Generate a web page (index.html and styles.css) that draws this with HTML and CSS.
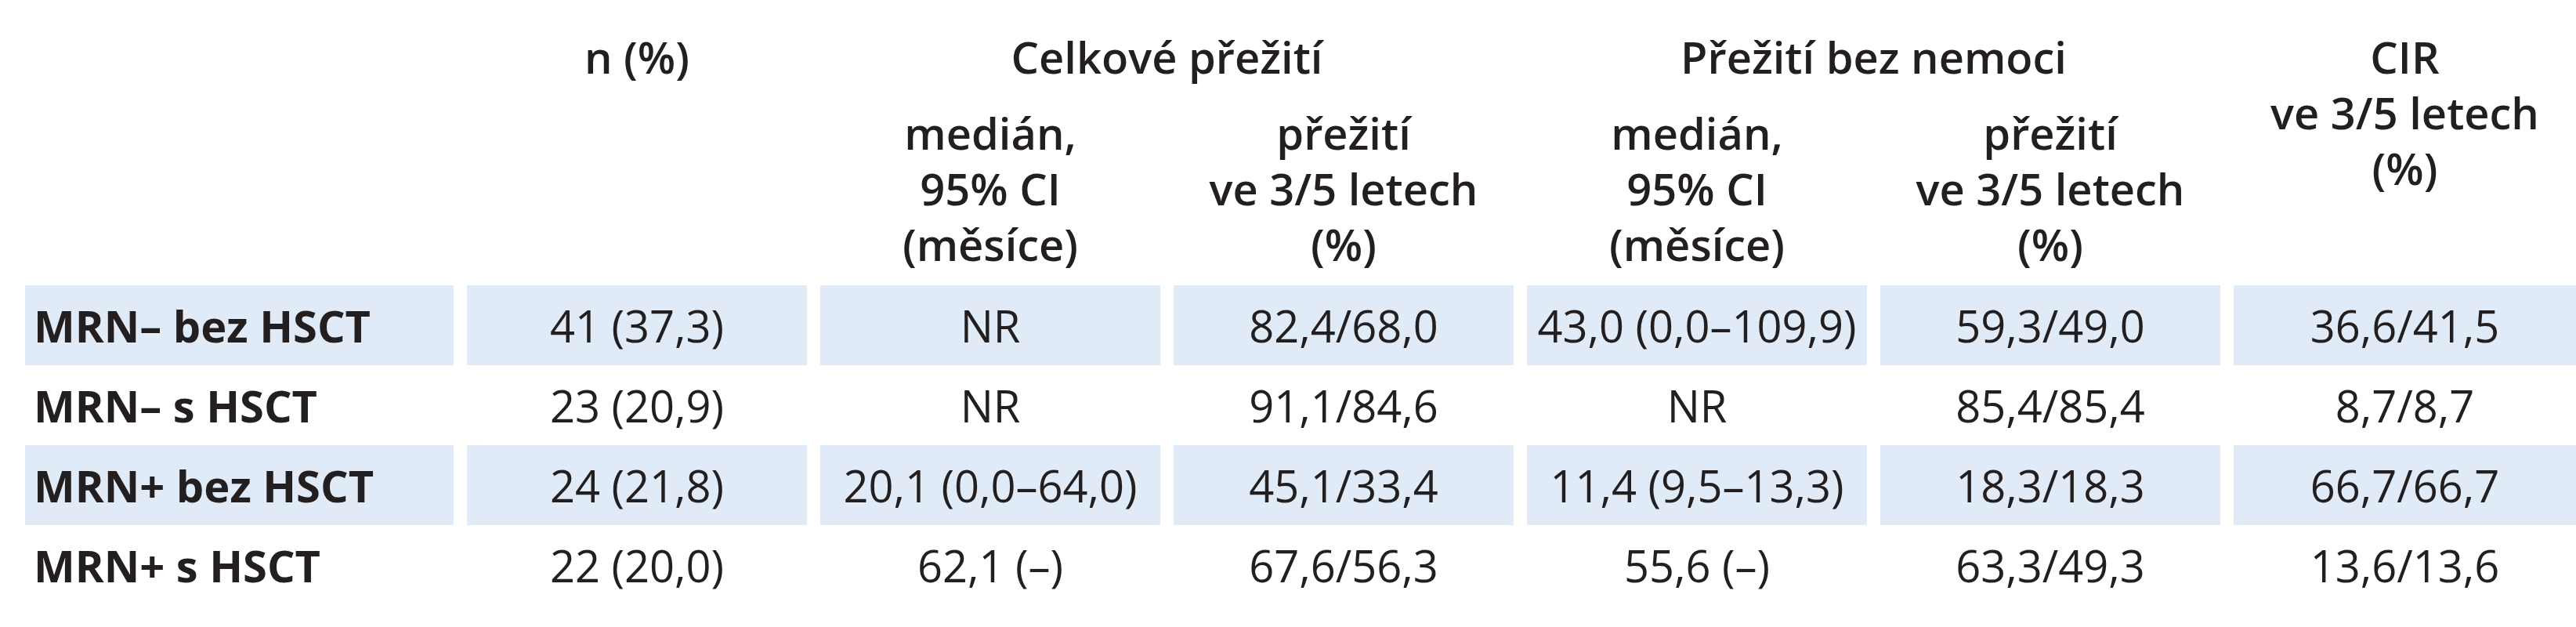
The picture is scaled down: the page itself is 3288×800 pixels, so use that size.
FILE: index.html
```html
<!DOCTYPE html>
<html lang="cs">
<head>
<meta charset="utf-8">
<title>Přežití podle MRN a HSCT</title>
<link rel="stylesheet" href="styles.css">
</head>
<body>
<table class="results">
  <colgroup>
    <col class="c-label">
    <col class="c-data">
    <col class="c-data">
    <col class="c-data">
    <col class="c-data">
    <col class="c-data">
    <col class="c-last">
  </colgroup>
  <thead>
    <tr class="head-top">
      <th class="h-empty" rowspan="2"></th>
      <th class="h-span" rowspan="2">n (%)</th>
      <th colspan="2">Celkové přežití</th>
      <th colspan="2">Přežití bez nemoci</th>
      <th class="h-span" rowspan="2">CIR<br>ve 3/5 letech<br>(%)</th>
    </tr>
    <tr class="head-sub">
      <th>medián,<br>95% CI<br>(měsíce)</th>
      <th>přežití<br>ve 3/5 letech<br>(%)</th>
      <th>medián,<br>95% CI<br>(měsíce)</th>
      <th>přežití<br>ve 3/5 letech<br>(%)</th>
    </tr>
  </thead>
  <tbody>
    <tr class="shaded">
      <th>MRN– bez HSCT</th>
      <td>41 (37,3)</td>
      <td>NR</td>
      <td>82,4/68,0</td>
      <td>43,0 (0,0–109,9)</td>
      <td>59,3/49,0</td>
      <td>36,6/41,5</td>
    </tr>
    <tr>
      <th>MRN– s HSCT</th>
      <td>23 (20,9)</td>
      <td>NR</td>
      <td>91,1/84,6</td>
      <td>NR</td>
      <td>85,4/85,4</td>
      <td>8,7/8,7</td>
    </tr>
    <tr class="shaded">
      <th>MRN+ bez HSCT</th>
      <td>24 (21,8)</td>
      <td>20,1 (0,0–64,0)</td>
      <td>45,1/33,4</td>
      <td>11,4 (9,5–13,3)</td>
      <td>18,3/18,3</td>
      <td>66,7/66,7</td>
    </tr>
    <tr>
      <th>MRN+ s HSCT</th>
      <td>22 (20,0)</td>
      <td>62,1 (–)</td>
      <td>67,6/56,3</td>
      <td>55,6 (–)</td>
      <td>63,3/49,3</td>
      <td>13,6/13,6</td>
    </tr>
  </tbody>
</table>
</body>
</html>
```

FILE: styles.css
```css
html, body {
  margin: 0;
  padding: 0;
  background: #ffffff;
  overflow: hidden;
}

body {
  font-family: "Open Sans", "Noto Sans", "DejaVu Sans", sans-serif;
  color: #231f20;
  font-size: 56px;
  line-height: 71px;
}

.results {
  border-collapse: separate;
  border-spacing: 17px 0;
  table-layout: fixed;
  margin-left: 15px;
  width: 3290px;
}

.c-label { width: 547px; }
.c-data { width: 434px; }
.c-last { width: 437px; }

.results th,
.results td {
  padding: 0;
  text-align: center;
  white-space: nowrap;
}

.results thead th {
  font-weight: 600;
  vertical-align: top;
}

.head-top th {
  padding-top: 37px;
}

.head-sub th {
  padding-top: 26px;
  padding-bottom: 17px;
}

.results tbody tr {
  height: 102px;
}

.results tbody th,
.results tbody td {
  vertical-align: middle;
  font-weight: 400;
}

.results tbody th {
  text-align: left;
  font-weight: 700;
  padding-left: 11px;
}

.shaded th,
.shaded td {
  background: #e1ebf7;
}
```
